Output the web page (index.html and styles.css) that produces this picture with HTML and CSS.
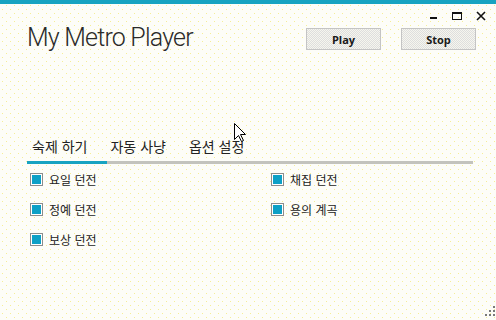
FILE: index.html
```html
<!DOCTYPE html>
<html lang="ko">
<head>
  <meta charset="UTF-8">
  <title>My Metro Player</title>
  <link rel="stylesheet" href="styles.css">
</head>
<body>
  <div class="topbar"></div>

  <div class="window-controls">
    <span class="ctrl">
      <svg width="10" height="10" viewBox="0 0 10 10"><rect x="2" y="6" width="7" height="2" fill="#111"/></svg>
    </span>
    <span class="ctrl">
      <svg width="10" height="10" viewBox="0 0 10 10"><rect x="0.5" y="1.5" width="9" height="7" fill="none" stroke="#111"/><rect x="0" y="1" width="10" height="2" fill="#111"/></svg>
    </span>
    <span class="ctrl">
      <svg width="10" height="10" viewBox="0 0 10 10"><path d="M1 1 L9 9 M9 1 L1 9" stroke="#111" stroke-width="1.6"/></svg>
    </span>
  </div>

  <div class="header">
    <h1>My Metro Player</h1>
    <div class="actions">
      <button class="button">Play</button>
      <button class="button">Stop</button>
    </div>
  </div>

  <!-- 탭 -->
  <div class="tabs">
    <div class="tab active">숙제 하기</div>
    <div class="tab">자동 사냥</div>
    <div class="tab">옵션 설정</div>
  </div>

  <div class="checks">
    <label class="check"><span class="box"></span>요일 던전</label>
    <label class="check"><span class="box"></span>채집 던전</label>
    <label class="check"><span class="box"></span>정예 던전</label>
    <label class="check"><span class="box"></span>용의 계곡</label>
    <label class="check"><span class="box"></span>보상 던전</label>
  </div>

  <div class="footer">
    <svg class="grip" width="10" height="10" viewBox="0 0 10 10" fill="#7a7a7a">
      <rect x="8" y="0" width="2" height="2"/>
      <rect x="4" y="4" width="2" height="2"/><rect x="8" y="4" width="2" height="2"/>
      <rect x="0" y="8" width="2" height="2"/><rect x="4" y="8" width="2" height="2"/><rect x="8" y="8" width="2" height="2"/>
    </svg>
  </div>

  <svg class="cursor" width="13" height="20" viewBox="0 0 13 20">
    <path d="M0.5 0.5 L0.5 16.5 L4.5 12.5 L7.5 18.5 L9.5 17.5 L6.5 11.5 L11.5 11.5 Z" fill="#fff" stroke="#000"/>
  </svg>
</body>
</html>
```

FILE: styles.css
```css
body {
  font-family: 'Noto Sans CJK KR', 'Noto Sans', sans-serif;
  margin: 0;
  height: 320px;
  display: flex;
  flex-direction: column;
  color: #222;
  background-color: #fdfdf8;
  background-image:
    conic-gradient(at 1px 1px, transparent 75%, #f6ee96 0),
    conic-gradient(at 1px 1px, transparent 75%, #f6ee96 0);
  background-size: 8px 8px;
  background-position: 2px 1px, 6px 5px;
  overflow: hidden;
}

.topbar {
  height: 4px;
  background-color: #17a3c1;
}

.window-controls {
  display: flex;
  justify-content: flex-end;
  align-items: center;
  height: 24px;
  padding-right: 3px;
}

.ctrl {
  display: flex;
  justify-content: center;
  align-items: center;
  width: 24px;
  height: 24px;
}

.header {
  display: flex;
  align-items: flex-start;
  padding: 0 20px 0 27px;
}

h1 {
  font-family: Roboto, 'Open Sans', sans-serif;
  font-weight: 300;
  font-size: 25px;
  line-height: 26px;
  letter-spacing: -0.8px;
  margin: -3px 0 0;
  color: #2a2a2a;
}

.actions {
  display: flex;
  gap: 20px;
  margin-left: auto;
}

.button {
  font-family: 'Open Sans', sans-serif;
  font-weight: 700;
  font-size: 11px;
  color: #1a1a1a;
  width: 75px;
  height: 22px;
  padding: 0;
  border: 1px solid #c4c4c4;
  background: repeating-conic-gradient(#dedede 0 25%, #f6f6ee 0 50%) 0 0 / 2px 2px;
}

.tabs {
  display: flex;
  margin: 85px 23px 0 27px;
  border-bottom: 3px solid #c3c3bd;
}

.tab {
  font-size: 14px;
  line-height: 20px;
  padding: 0 20px 5px 5px;
  margin-right: -2px;
  margin-bottom: -3px;
  border-bottom: 3px solid transparent;
}

.tab.active {
  border-bottom-color: #17a3c1;
}

.checks {
  display: grid;
  grid-template-columns: 241px 241px;
  grid-auto-rows: 30px;
  margin-left: 30px;
}

.check {
  display: flex;
  align-items: center;
  gap: 6px;
  font-size: 12px;
}

.box {
  width: 9px;
  height: 9px;
  border: 1px solid #fff;
  outline: 1px solid #8c8c8c;
  margin: 1px;
  background-color: #0ca0c6;
}

.footer {
  margin-top: auto;
  display: flex;
  justify-content: flex-end;
  padding: 0 1px 4px 0;
}

.cursor {
  position: absolute;
  left: 234px;
  top: 123px;
}
```
